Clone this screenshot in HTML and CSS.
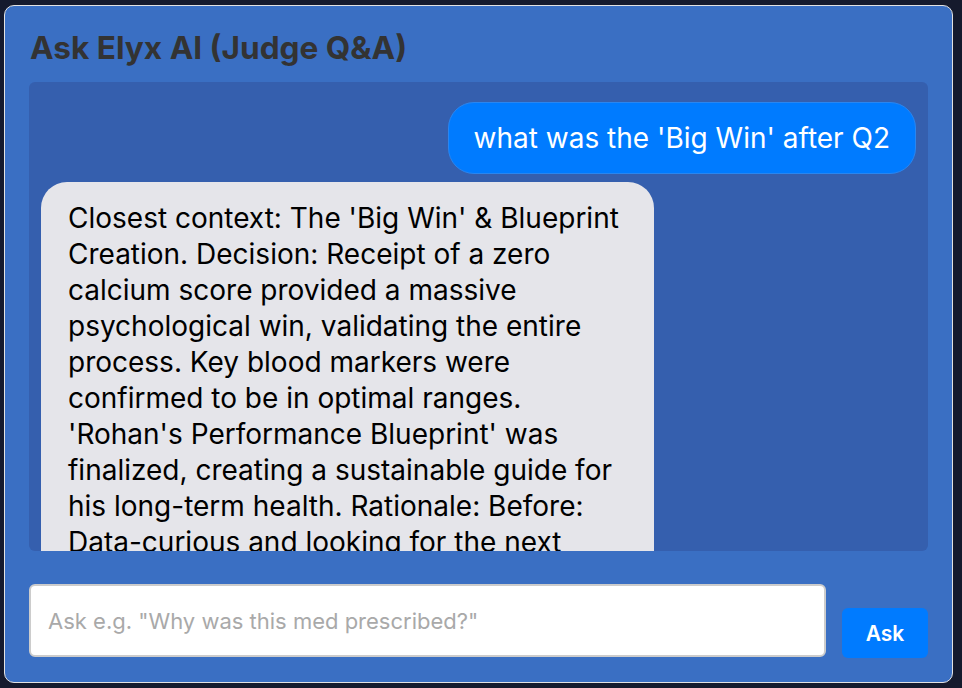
FILE: index.html
```html
<!DOCTYPE html>
<html>
<head>
    <title>Ask Elyx AI</title>
    <link rel="stylesheet" href="styles.css">
</head>
<body>
    <div class="panel">
        <h2 class="title">Ask Elyx AI (Judge Q&amp;A)</h2>
        <div class="chat" id="chat">
            <div class="msg user">what was the 'Big Win' after Q2</div>
            <div class="msg bot">Closest context: The 'Big Win' &amp; Blueprint Creation. Decision: Receipt of a zero calcium score provided a massive psychological win, validating the entire process. Key blood markers were confirmed to be in optimal ranges. 'Rohan's Performance Blueprint' was finalized, creating a sustainable guide for his long-term health. Rationale: Before: Data-curious and looking for the next optimization. After: Confident in his plan and focused on consistency.</div>
        </div>
        <form class="ask-row" onsubmit="return false">
            <input class="ask-input" type="text" placeholder="Ask e.g. &quot;Why was this med prescribed?&quot;">
            <button class="ask-btn" type="submit">Ask</button>
        </form>
    </div>
</body>
</html>
```
FILE: styles.css
```css
body {
    margin: 0;
    background: #151a2d;
    font-family: Inter, "Noto Sans", sans-serif;
}

.panel {
    margin: 5px 9px 5px 4px;
    height: 678px;
    box-sizing: border-box;
    background: #3a6fc3;
    border: 1px solid #e2e2e2;
    border-radius: 10px;
    padding: 24px;
    display: flex;
    flex-direction: column;
}

.title {
    margin: 0 0 16px 1px;
    font-size: 31.6px;
    line-height: 36px;
    font-weight: 700;
    color: #333;
}

.chat {
    height: 469px;
    flex: none;
    background: #355fae;
    border-radius: 6px;
    padding: 12px;
    box-sizing: border-box;
    overflow: hidden;
}

.msg {
    margin: 8px 0;
    font-size: 28px;
    line-height: 36px;
    border-radius: 26px;
    max-width: 70%;
    width: fit-content;
    box-sizing: border-box;
}

.user {
    margin-left: auto;
    background: #007bff;
    border: 1px solid #2a86f0;
    color: #fff;
    padding: 17px 25px;
}

.bot {
    background: #e5e5ea;
    color: #000;
    padding: 18px 27px;
}

.ask-row {
    margin: 33px 0 0;
    display: flex;
    align-items: flex-end;
    gap: 16px;
}

.ask-input {
    flex: 1;
    height: 73px;
    box-sizing: border-box;
    border: 2px solid #ccc;
    border-radius: 6px;
    padding: 0 17px;
    font-family: Inter, sans-serif;
    font-size: 22px;
    background: #fff;
}

.ask-input::placeholder {
    color: #a9a9a9;
}

.ask-btn {
    width: 86px;
    height: 50px;
    margin-bottom: -1px;
    border: none;
    border-radius: 6px;
    background: #007bff;
    color: #fff;
    font-family: Inter, sans-serif;
    font-size: 21px;
    font-weight: 600;
}
```
